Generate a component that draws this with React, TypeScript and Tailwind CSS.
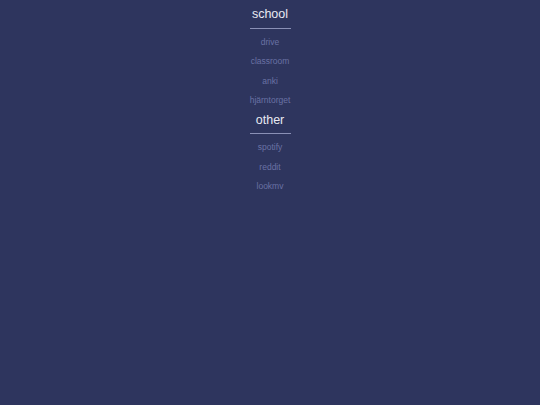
const sections = [
  { title: "school", links: ["drive", "classroom", "anki", "hjärntorget"] },
  { title: "other", links: ["spotify", "reddit", "lookmv"] },
];

export default function App() {
  return (
    <div className="min-h-screen w-full bg-[#2e355e] font-['Liberation_Sans',Arial,sans-serif] pt-[6px]">
      <div className="flex flex-col items-center gap-[1px]">
        {sections.map((s) => (
          <div key={s.title} className="flex flex-col items-center">
            <h2 className="text-[12.5px] leading-[16px] text-[#e8e9f2]">{s.title}</h2>
            <div className="mt-[5.5px] h-px w-[41px] bg-[#8a90b6]" />
            <ul className="mt-[4px] flex flex-col items-center">
              {s.links.map((l) => (
                <li key={l}>
                  <a href="#" className="block text-[8.5px] leading-[19.5px] text-[#6a72a4]">
                    {l}
                  </a>
                </li>
              ))}
            </ul>
          </div>
        ))}
      </div>
    </div>
  );
}
